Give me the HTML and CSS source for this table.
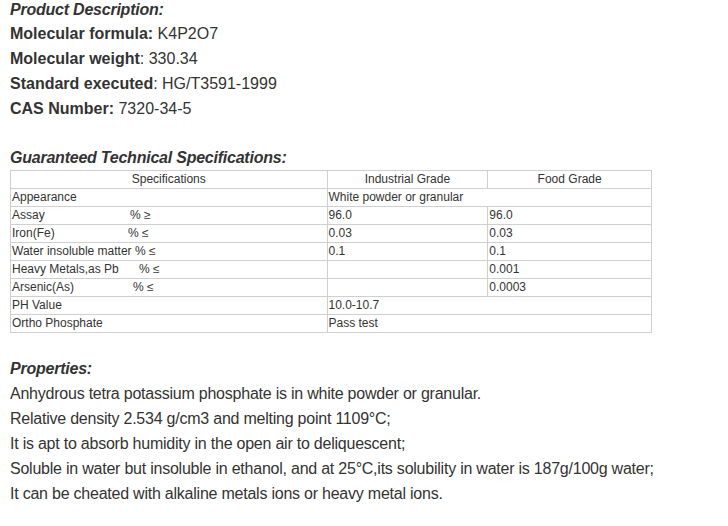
FILE: index.html
```html
<!DOCTYPE html>
<html>
<head>
<meta charset="utf-8">
<link rel="stylesheet" href="styles.css">
</head>
<body>
<div class="page">
  <div class="line heading first">Product Description:</div>
  <div class="line"><b>Molecular formula:</b> K4P2O7</div>
  <div class="line"><b>Molecular weight</b>: 330.34</div>
  <div class="line"><b>Standard executed</b>: HG/T3591-1999</div>
  <div class="line"><b>CAS Number:</b> 7320-34-5</div>
  <div class="line blank">&nbsp;</div>
  <div class="line heading">Guaranteed Technical Specifications:</div>
  <table class="spec">
    <colgroup><col class="c1"><col class="c2"><col class="c3"></colgroup>
    <tr><td class="center">Specifications</td><td class="center">Industrial Grade</td><td class="center">Food Grade</td></tr>
    <tr><td>Appearance</td><td colspan="2">White powder or granular</td></tr>
    <tr><td><span class="name n1">Assay</span>% ≥</td><td>96.0</td><td>96.0</td></tr>
    <tr><td><span class="name n2">Iron(Fe)</span>% ≤</td><td>0.03</td><td>0.03</td></tr>
    <tr><td>Water insoluble matter % ≤</td><td>0.1</td><td>0.1</td></tr>
    <tr><td><span class="name n3">Heavy Metals,as Pb</span>% ≤</td><td></td><td>0.001</td></tr>
    <tr><td><span class="name n4">Arsenic(As)</span>% ≤</td><td></td><td>0.0003</td></tr>
    <tr><td>PH Value</td><td colspan="2">10.0-10.7</td></tr>
    <tr><td>Ortho Phosphate</td><td colspan="2">Pass test</td></tr>
  </table>
  <div class="line heading props">Properties:</div>
  <div class="line prop">Anhydrous tetra potassium phosphate is in white powder or granular.</div>
  <div class="line prop">Relative density 2.534 g/cm3 and melting point 1109°C;</div>
  <div class="line prop">It is apt to absorb humidity in the open air to deliquescent;</div>
  <div class="line prop">Soluble in water but insoluble in ethanol, and at 25°C,its solubility in water is 187g/100g water;</div>
  <div class="line prop">It can be cheated with alkaline metals ions or heavy metal ions.</div>
</div>
</body>
</html>
```
FILE: styles.css
```css
html, body {
  margin: 0;
  padding: 0;
  background: #fff;
}
.page {
  padding: 0 0 0 10px;
  margin-top: -2px;
  font-family: "Liberation Sans", Arial, sans-serif;
  font-size: 16px;
  color: #333;
}
.line {
  line-height: 25px;
  white-space: nowrap;
}
.line.first {
  line-height: 23px;
}
.line.blank {
  line-height: 24px;
}
.heading {
  font-weight: bold;
  font-style: italic;
  letter-spacing: -0.23px;
}
.prop {
  letter-spacing: -0.23px;
}
.spec {
  border-collapse: collapse;
  width: 642px;
  font-size: 12px;
  color: #333;
  margin-top: 0;
}
.spec col.c1 { width: 317px; }
.spec col.c2 { width: 161px; }
.spec col.c3 { width: 164px; }
.spec td {
  border: 1px solid #cfcfcf;
  height: 17px;
  padding: 0 1px;
  line-height: 17px;
  white-space: nowrap;
}
.spec td.center {
  text-align: center;
}
.name {
  display: inline-block;
}
.n1 { width: 118px; }
.n2 { width: 116px; }
.n3 { width: 127px; }
.n4 { width: 121px; }
.props {
  margin-top: 23px;
}
```
